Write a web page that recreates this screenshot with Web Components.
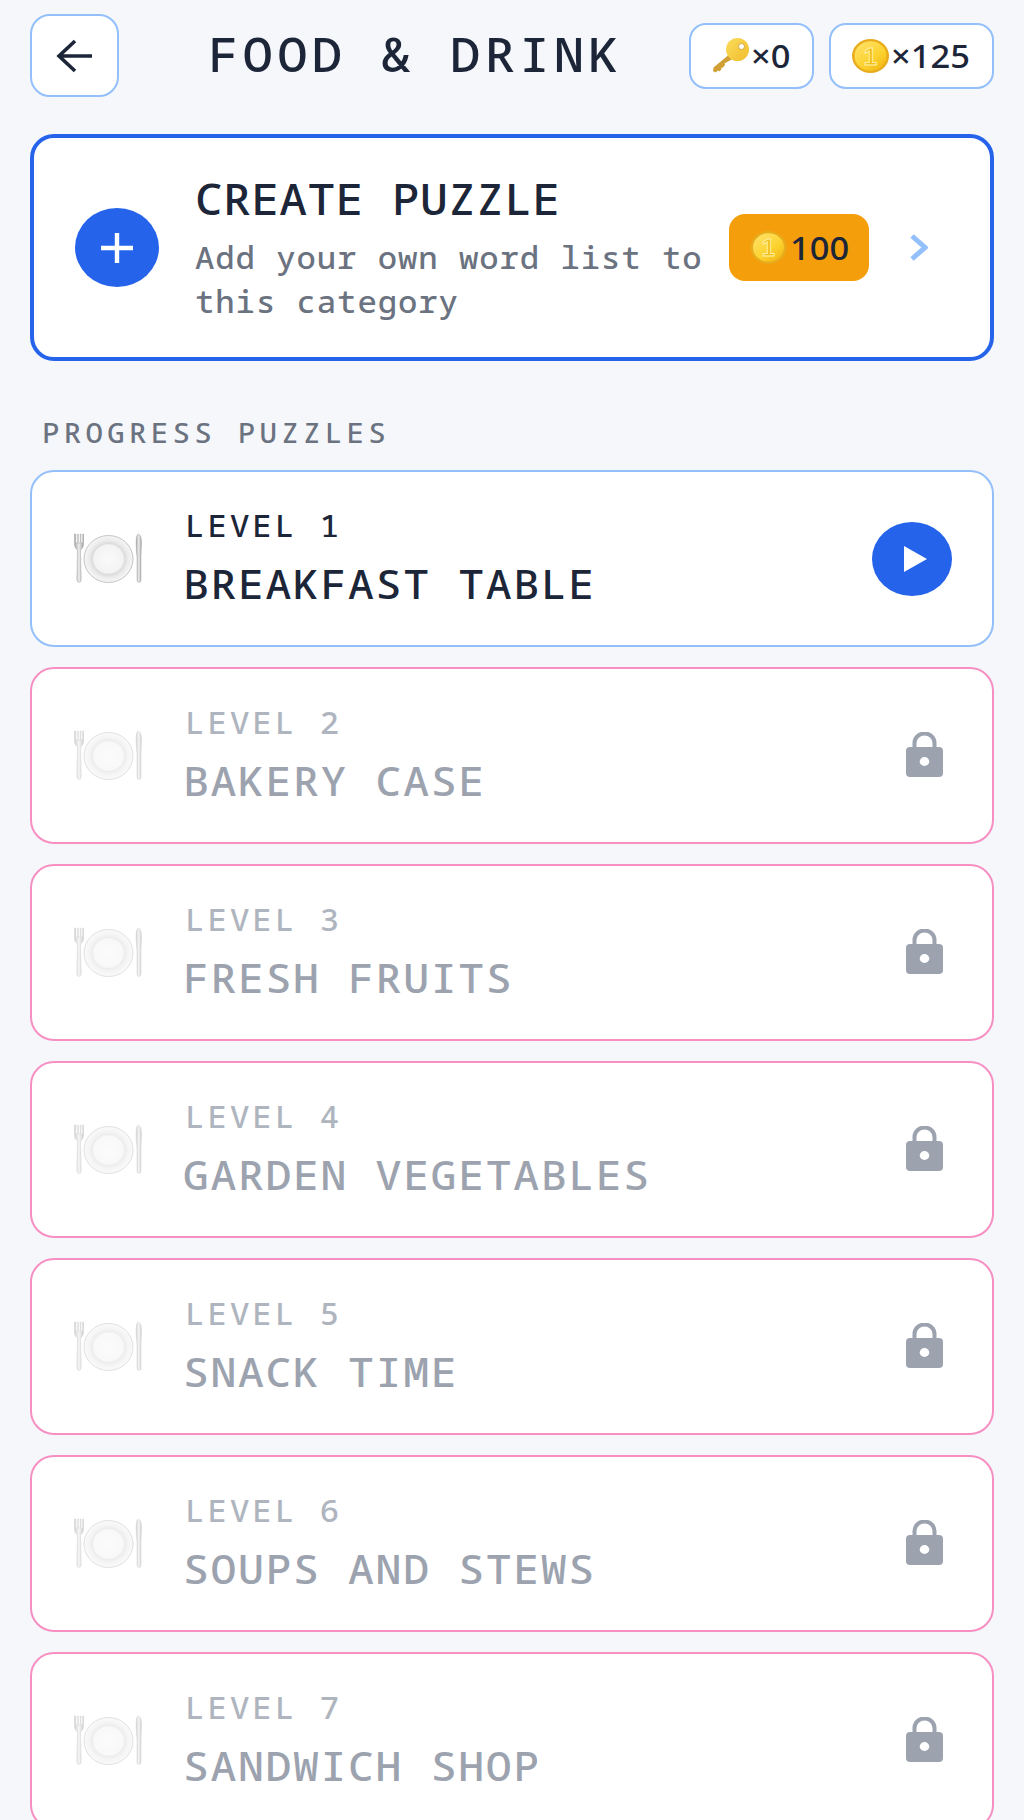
<!DOCTYPE html>
<html>
<head>
<meta charset="utf-8">
<title>Food & Drink</title>
<style>
	html, body { margin: 0; height: 1820px; overflow: hidden; background: #f5f7fb; }
	body { font-family: "Noto Sans Mono", "DejaVu Sans Mono", "Liberation Mono", monospace; color: #1c2638; }
</style>
</head>
<body>
<puzzle-screen>
	<top-bar title="FOOD &amp; DRINK">
		<stat-pill icon="key" slot="stats" style="width:125px">×0</stat-pill>
		<stat-pill icon="coin" slot="stats" style="width:165px">×125</stat-pill>
	</top-bar>
	<create-card price="100"></create-card>
	<section-label>PROGRESS PUZZLES</section-label>
	<level-card level="1" name="BREAKFAST TABLE"></level-card>
	<level-card level="2" name="BAKERY CASE" locked></level-card>
	<level-card level="3" name="FRESH FRUITS" locked></level-card>
	<level-card level="4" name="GARDEN VEGETABLES" locked></level-card>
	<level-card level="5" name="SNACK TIME" locked></level-card>
	<level-card level="6" name="SOUPS AND STEWS" locked></level-card>
	<level-card level="7" name="SANDWICH SHOP" locked></level-card>
</puzzle-screen>

<script>
let uid = 0;

const WIDE = 'transform: scaleX(1.077); transform-origin: 0 50%;';

function coinIcon(w, h) {
	const id = 'coin' + (++uid);
	return `<svg width="${w}" height="${h}" viewBox="0 0 37 34" aria-hidden="true">
		<defs><linearGradient id="${id}" x1="0.1" y1="0" x2="0.9" y2="1">
			<stop offset="0" stop-color="#ffe36a"/><stop offset="0.6" stop-color="#fcd22e"/><stop offset="1" stop-color="#f2b413"/>
		</linearGradient></defs>
		<ellipse cx="18.5" cy="17" rx="18.5" ry="17" fill="#e8ab1c"/>
		<ellipse cx="18.5" cy="17" rx="16" ry="14.7" fill="url(#${id})"/>
		<text x="18.5" y="25.5" text-anchor="middle" font-family="Liberation Sans, sans-serif" font-weight="700" font-size="24" fill="#f5bf1e" stroke="#fff2a8" stroke-width="0.9">1</text>
	</svg>`;
}

function keyIcon() {
	const id = 'key' + (++uid);
	return `<svg width="37" height="35" viewBox="0 0 37 35" aria-hidden="true">
		<defs><linearGradient id="${id}" x1="0" y1="0" x2="1" y2="1">
			<stop offset="0" stop-color="#fbdc5c"/><stop offset="1" stop-color="#f0bd2c"/>
		</linearGradient></defs>
		<path d="M19 15 L1.5 29.5 L1 33 L3.5 34.5 L6 32.5 L7 33.5 L9.5 31.5 L9 30 L11 29.5 L13 27 L12.5 25.5 L24 19 Z" fill="#d0a035"/>
		<ellipse cx="25.5" cy="11.5" rx="11.5" ry="11.5" fill="url(#${id})"/>
		<circle cx="29.5" cy="8.5" r="3" fill="#fff" stroke="#c9962a" stroke-width="0.8"/>
	</svg>`;
}

function plateIcon() {
	const id = 'plate' + (++uid);
	return `<svg width="69" height="50" viewBox="0 0 69 50" aria-hidden="true">
		<defs>
			<radialGradient id="${id}"><stop offset="0" stop-color="#fafafa"/><stop offset="0.6" stop-color="#f3f3f3"/><stop offset="0.66" stop-color="#dcdcdc"/><stop offset="0.8" stop-color="#ececec"/><stop offset="1" stop-color="#f6f6f6"/></radialGradient>
			<linearGradient id="${id}m"><stop offset="0" stop-color="#a8a8a8"/><stop offset="0.5" stop-color="#ededed"/><stop offset="1" stop-color="#a0a0a0"/></linearGradient>
		</defs>
		<path d="M1.5 1 V11 Q1.5 15 4.5 17 L3.8 46 Q4 49.5 6 49.5 Q8 49.5 8.2 46 L7.5 17 Q10.5 15 10.5 11 V1 H9.7 V10 H8 V1 H7.2 V10 H5.4 V1 H4.6 V10 H2.8 V1 Z" fill="url(#${id}m)" stroke="#9a9a9a" stroke-width="0.4"/>
		<ellipse cx="35.5" cy="26" rx="24.5" ry="23.5" fill="url(#${id})" stroke="#bdbdbd" stroke-width="0.9"/>
		<path d="M65.5 1 Q68.5 2 68.5 10 L68 22 V47 Q68 49.5 66 49.5 Q64 49.5 64 47 V24 Q62.5 10 63.5 4 Q64 1 65.5 1 Z" fill="url(#${id}m)" stroke="#9a9a9a" stroke-width="0.4"/>
	</svg>`;
}

class PuzzleScreen extends HTMLElement {
	constructor() {
		super();
		this.attachShadow({ mode: 'open' });
		this.shadowRoot.innerHTML = `
			<style>
				:host { display: flex; flex-direction: column; padding: 14px 30px 0; }
			</style>
			<slot></slot>
		`;
	}
}

class TopBar extends HTMLElement {
	constructor() {
		super();
		this.attachShadow({ mode: 'open' });
		this.shadowRoot.innerHTML = `
			<style>
				:host { display: flex; align-items: center; height: 83px; margin-bottom: 37px; }
				.back {
					width: 89px; height: 83px; box-sizing: border-box; flex: none;
					display: flex; align-items: center; justify-content: center;
					background: #fff; border: 2.5px solid #93c0fa; border-radius: 20px;
				}
				h1 {
					flex: 1; margin: 0; padding-left: 89px; white-space: pre;
					font-size: 47px; font-weight: 550; letter-spacing: 3.9px; line-height: 81px; height: 83px;
				}
				h1 span { display: inline-block; ${WIDE} }
				.stats { display: flex; gap: 15px; flex: none; }
			</style>
			<div class="back">
				<svg width="37" height="34" viewBox="0 0 37 34" fill="none" stroke="#1c2638" stroke-width="3.6"><path d="M36 17 H3 M19 2 L3 17 L19 32"/></svg>
			</div>
			<h1><span>${this.getAttribute('title').replace('&', '&amp;')}</span></h1>
			<div class="stats"><slot name="stats"></slot></div>
		`;
	}
}

class StatPill extends HTMLElement {
	constructor() {
		super();
		this.attachShadow({ mode: 'open' });
		const icon = this.getAttribute('icon') === 'key' ? keyIcon() : coinIcon(37, 34);
		this.shadowRoot.innerHTML = `
			<style>
				:host {
					display: flex; align-items: center; gap: 2px;
					height: 66px; box-sizing: border-box; padding-left: 21px;
					background: #fff; border: 2.5px solid #93c0fa; border-radius: 17px;
					font-family: "Noto Sans", "Open Sans", sans-serif; font-size: 32px; font-weight: 500; letter-spacing: 0;
				}
				svg { flex: none; }
				span { display: inline-block; ${WIDE} }
			</style>
			${icon}<span><slot></slot></span>
		`;
	}
}

class CreateCard extends HTMLElement {
	constructor() {
		super();
		this.attachShadow({ mode: 'open' });
		this.shadowRoot.innerHTML = `
			<style>
				:host {
					display: flex; align-items: center; height: 227px; box-sizing: border-box;
					padding: 0 62px 0 41px;
					background: #fff; border: 4px solid #2563eb; border-radius: 24px;
				}
				.plus {
					width: 84px; height: 79px; border-radius: 50%; background: #2563eb; flex: none;
					display: flex; align-items: center; justify-content: center; margin-right: 36px;
				}
				.text { flex: 1; min-width: 0; }
				h2 { margin: 0 0 9px; font-size: 43px; font-weight: 550; letter-spacing: 0.3px; line-height: 56px; ${WIDE} }
				p { margin: 0; width: 490px; font-size: 30px; font-weight: 500; letter-spacing: 0.85px; line-height: 44px; color: #6b7280; ${WIDE} }
				.price {
					flex: none; width: 140px; height: 67px; box-sizing: border-box; padding-left: 21px; border-radius: 16px; background: #f59e0b; margin-right: 41px;
					display: flex; align-items: center; gap: 3px;
					font-family: "Noto Sans", "Open Sans", sans-serif; font-size: 32px; font-weight: 500;
				}
				.price span { display: inline-block; ${WIDE} }
				.price svg { flex: none; }
			</style>
			<div class="plus">
				<svg width="32" height="30" viewBox="0 0 32 30" stroke="#fff" stroke-width="4.4"><path d="M0 15 H32 M16 0 V30"/></svg>
			</div>
			<div class="text">
				<h2>CREATE PUZZLE</h2>
				<p>Add your own word list to this category</p>
			</div>
			<div class="price">${coinIcon(37, 33)}<span>${this.getAttribute('price')}</span></div>
			<svg width="18" height="27" viewBox="0 0 18 27" fill="none" stroke="#93c0fa" stroke-width="5"><path d="M2 2 L15 13.5 L2 25"/></svg>
		`;
	}
}

class SectionLabel extends HTMLElement {
	constructor() {
		super();
		this.attachShadow({ mode: 'open' });
		this.shadowRoot.innerHTML = `
			<style>
				:host {
					display: block; padding: 55px 12px 20px; line-height: 34px;
					font-size: 27px; font-weight: 500; letter-spacing: 4px; color: #6b7280;
				}
				span { display: inline-block; ${WIDE} }
			</style>
			<span><slot></slot></span>
		`;
	}
}

class LevelCard extends HTMLElement {
	constructor() {
		super();
		this.attachShadow({ mode: 'open' });
		const locked = this.hasAttribute('locked');
		const action = locked
			? `<svg class="lock" width="37" height="45" viewBox="0 0 37 45"><path d="M8.5 17 V11 A10 9.5 0 0 1 28.5 11 V17" fill="none" stroke="#9ca3af" stroke-width="4"/><rect y="15" width="37" height="30" rx="4" fill="#9ca3af"/><ellipse cx="18.5" cy="29.5" rx="4.8" ry="4.4" fill="#fff"/></svg>`
			: `<div class="play"><svg width="23" height="26" viewBox="0 0 23 26"><path d="M0 0 L23 13 L0 26 Z" fill="#fff"/></svg></div>`;
		this.shadowRoot.innerHTML = `
			<style>
				:host {
					display: flex; align-items: center; height: 177px; box-sizing: border-box; flex: none;
					margin-bottom: 20px; padding: 0 40px 0 41px;
					background: #fff; border: 2.5px solid ${locked ? '#f78fc2' : '#93c0fa'}; border-radius: 24px;
				}
				.plate { flex: none; width: 69px; height: 50px; margin-right: 42px; opacity: ${locked ? 0.5 : 1}; margin-top: -2px; }
				.text { flex: 1; color: ${locked ? '#9ca3af' : '#1c2638'}; }
				.level { font-size: 30px; font-weight: 500; letter-spacing: 2.85px; line-height: 38px; margin-bottom: 13px; margin-left: 1px; opacity: ${locked ? 0.8 : 1}; ${WIDE} }
				.name { font-size: 40px; font-weight: 550; letter-spacing: 1.55px; line-height: 52px; margin-left: -1px; margin-bottom: 1px; ${WIDE} }
				.play { width: 80px; height: 74px; border-radius: 50%; background: #2563eb; display: flex; align-items: center; justify-content: center; }
				.play svg { margin-left: 6px; }
				.lock { margin-right: 9px; margin-bottom: 3px; }
			</style>
			<div class="plate">${plateIcon()}</div>
			<div class="text">
				<div class="level">LEVEL ${this.getAttribute('level')}</div>
				<div class="name">${this.getAttribute('name')}</div>
			</div>
			${action}
		`;
	}
}

customElements.define('puzzle-screen', PuzzleScreen);
customElements.define('top-bar', TopBar);
customElements.define('stat-pill', StatPill);
customElements.define('create-card', CreateCard);
customElements.define('section-label', SectionLabel);
customElements.define('level-card', LevelCard);
</script>
</body>
</html>
